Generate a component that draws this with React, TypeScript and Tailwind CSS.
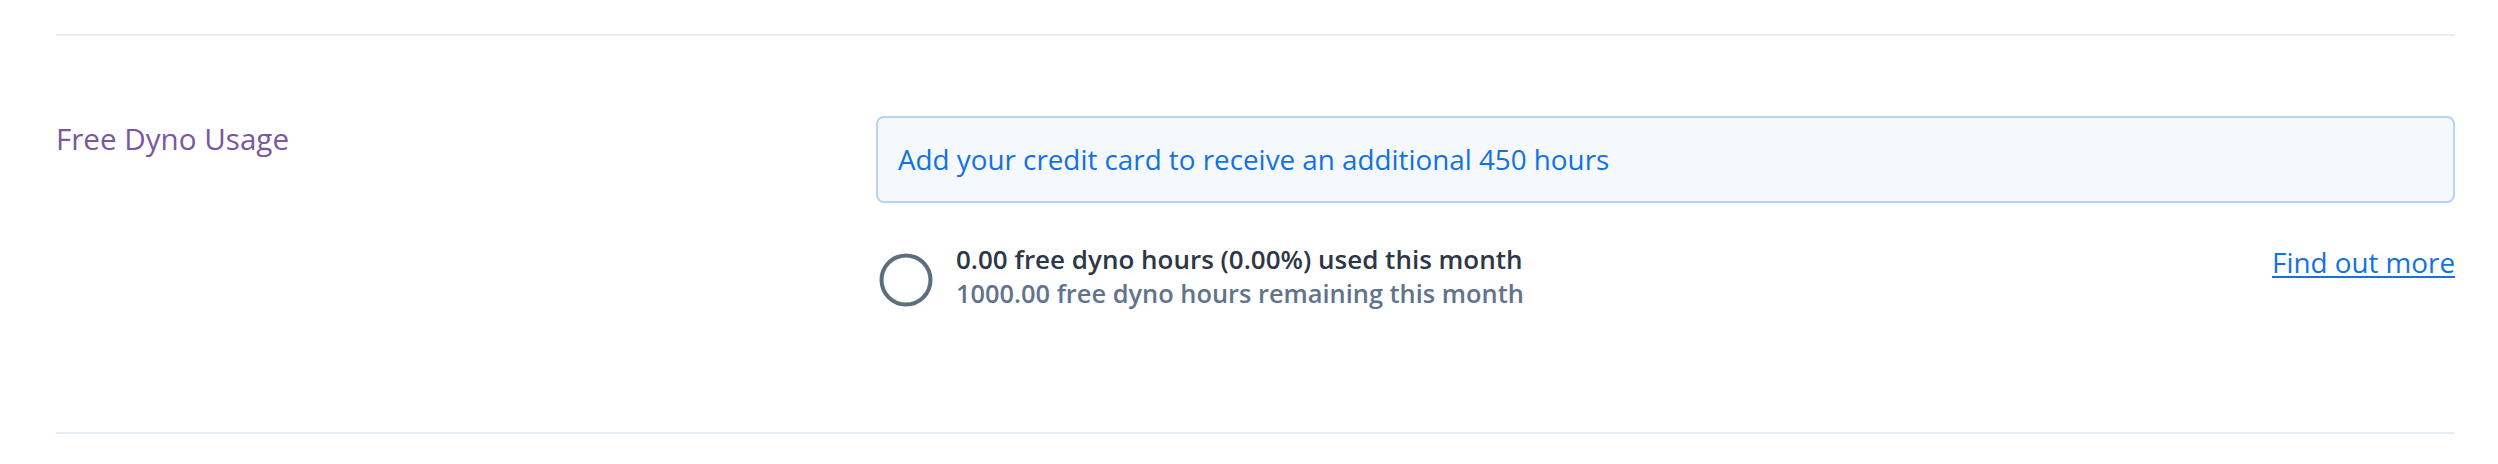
import React from 'react';

const font = { fontFamily: '"Open Sans", Lato, sans-serif' };

const UsageRing: React.FC = () => (
  <svg width="56" height="56" viewBox="0 0 56 56" className="shrink-0">
    <circle cx="28" cy="28" r="24.5" fill="none" stroke="#5d6c80" strokeWidth="4" />
    <circle cx="28" cy="28" r="22.6" fill="none" stroke="#7fb26a" strokeWidth="0.6" opacity="0.5" />
  </svg>
);

const App: React.FC = () => {
  return (
    <div className="w-full h-[464px] bg-white pt-[34px] pl-[56px] pr-[43px]" style={font}>
      <div className="h-[400px] border-t-2 border-b-2 border-[#e8ebf2] flex pt-[80px]">
        <div className="w-[820px] shrink-0">
          <h2 className="text-[29.6px] leading-[45px] text-[#79589f]">Free Dyno Usage</h2>
        </div>
        <div className="flex-1">
          <div className="h-[87px] border-2 border-[#b7d4f5] bg-[#f5f8fd] rounded-[8px] flex items-center px-[20px]">
            <span className="text-[27.8px] text-[#1272e0]">Add your credit card to receive an additional 450 hours</span>
          </div>
          <div className="mt-[39px] flex items-start justify-between">
            <div className="flex items-start gap-[22px] pl-[3px]">
              <div className="mt-[10px] -ml-[1px]">
                <UsageRing />
              </div>
              <div className="leading-[34px]">
                <div className="text-[26px] font-semibold text-[#2e3747]">0.00 free dyno hours (0.00%) used this month</div>
                <div className="text-[25.4px] font-semibold text-[#62748d]">1000.00 free dyno hours remaining this month</div>
              </div>
            </div>
            <a href="#" className="text-[27.8px] leading-[40px] text-[#1272e0] underline underline-offset-[3px] decoration-2">
              Find out more
            </a>
          </div>
        </div>
      </div>
    </div>
  );
};

export default App;
